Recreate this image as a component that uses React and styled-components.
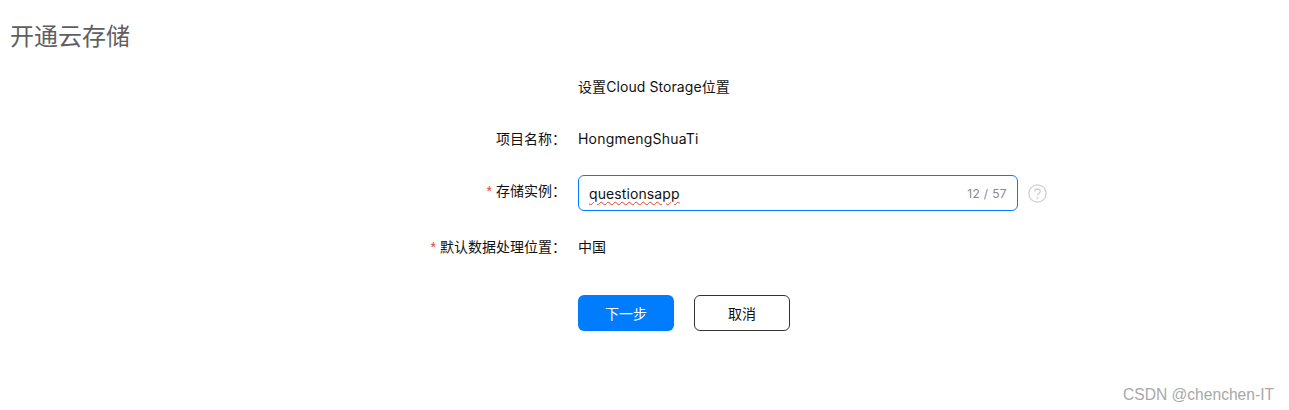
import React from "react";
import styled, { createGlobalStyle } from "styled-components";

const GlobalStyle = createGlobalStyle`
  html, body {
    margin: 0;
    padding: 0;
    background: #ffffff;
  }
  body {
    font-family: "Noto Sans CJK SC", "Liberation Sans", sans-serif;
  }
`;

export default function App() {
  return (
    <Page>
      <GlobalStyle />
      <Title>开通云存储</Title>
      <Form>
        <Row $top={0}>
          <Label />
          <Value $spacing={0.08}>设置Cloud Storage位置</Value>
        </Row>
        <Row $top={16}>
          <Label>项目名称：</Label>
          <Value $spacing={0.2}>HongmengShuaTi</Value>
        </Row>
        <Row $top={19}>
          <Label $shift={-3}>
            <Star>*</Star>存储实例：
          </Label>
          <Field>
            <FieldText>questionsapp</FieldText>
            <Counter>12 / 57</Counter>
          </Field>
          <HelpIcon />
        </Row>
        <Row $top={17}>
          <Label>
            <Star>*</Star>默认数据处理位置：
          </Label>
          <Value>中国</Value>
        </Row>
        <Actions>
          <PrimaryButton>下一步</PrimaryButton>
          <OutlineButton>取消</OutlineButton>
        </Actions>
      </Form>
      <Watermark>CSDN @chenchen-IT</Watermark>
    </Page>
  );
}

function HelpIcon() {
  return (
    <HelpSvg viewBox="0 0 18 18" width="19" height="19" fill="none">
      <circle cx="9" cy="9" r="8.2" stroke="#d0d0d0" strokeWidth="1.3" />
      <path
        d="M6.5 7.2c0-1.5 1.1-2.5 2.6-2.5s2.5 1 2.5 2.2c0 1.9-2.5 2-2.5 3.9"
        stroke="#d0d0d0"
        strokeWidth="1.3"
      />
      <circle cx="9.1" cy="13.2" r="0.9" fill="#d0d0d0" />
    </HelpSvg>
  );
}

const Page = styled.div`
  position: relative;
  width: 1289px;
  height: 410px;
  overflow: hidden;
  background: #ffffff;
`;

const Title = styled.h1`
  margin: 0;
  padding: 17px 0 0 10px;
  height: 36px;
  font-size: 24px;
  line-height: 36px;
  font-weight: 400;
  color: #5f5f5f;
`;

const Form = styled.div`
  display: flex;
  flex-direction: column;
  padding-top: 15px;
`;

const Row = styled.div`
  display: flex;
  align-items: center;
  height: 36px;
  margin-top: ${(p) => p.$top}px;
`;

const Label = styled.div`
  width: 566px;
  flex-shrink: 0;
  margin-right: 12px;
  text-align: right;
  font-size: 14px;
  color: #111111;
  transform: translateY(${(p) => p.$shift || 0}px);
`;

const Star = styled.span`
  color: #e8402c;
  margin-right: 4px;
  font-family: "Liberation Sans", sans-serif;
`;

const Value = styled.div`
  font-family: "Inter", "Noto Sans CJK SC", sans-serif;
  font-size: 14px;
  color: #111111;
  letter-spacing: ${(p) => p.$spacing || 0}px;
`;

const Field = styled.div`
  display: flex;
  align-items: center;
  justify-content: space-between;
  box-sizing: border-box;
  width: 440px;
  height: 36px;
  padding: 0 10px;
  border: 1px solid #007dff;
  border-radius: 6px;
`;

const FieldText = styled.span`
  font-family: "Inter", sans-serif;
  font-size: 14px;
  color: #111111;
  letter-spacing: 0.1px;
  text-decoration: underline wavy #e8402c 1.4px;
  text-underline-offset: 2px;
`;

const Counter = styled.span`
  font-family: "Inter", sans-serif;
  font-size: 12px;
  letter-spacing: 0.35px;
  color: #8a8a8a;
`;

const HelpSvg = styled.svg`
  margin-left: 10px;
`;

const Actions = styled.div`
  display: flex;
  gap: 20px;
  margin: 31px 0 0 578px;
`;

const PrimaryButton = styled.button`
  box-sizing: border-box;
  width: 96px;
  height: 36px;
  border: none;
  border-radius: 6px;
  background: #007dff;
  color: #ffffff;
  font-family: inherit;
  font-size: 14px;
  padding: 0;
`;

const OutlineButton = styled(PrimaryButton)`
  border: 1px solid #333333;
  background: #ffffff;
  color: #111111;
`;

const Watermark = styled.div`
  position: absolute;
  right: 15px;
  bottom: 6px;
  font-family: "Liberation Sans", sans-serif;
  font-size: 15.6px;
  line-height: 18px;
  color: #a8a8a8;
`;
